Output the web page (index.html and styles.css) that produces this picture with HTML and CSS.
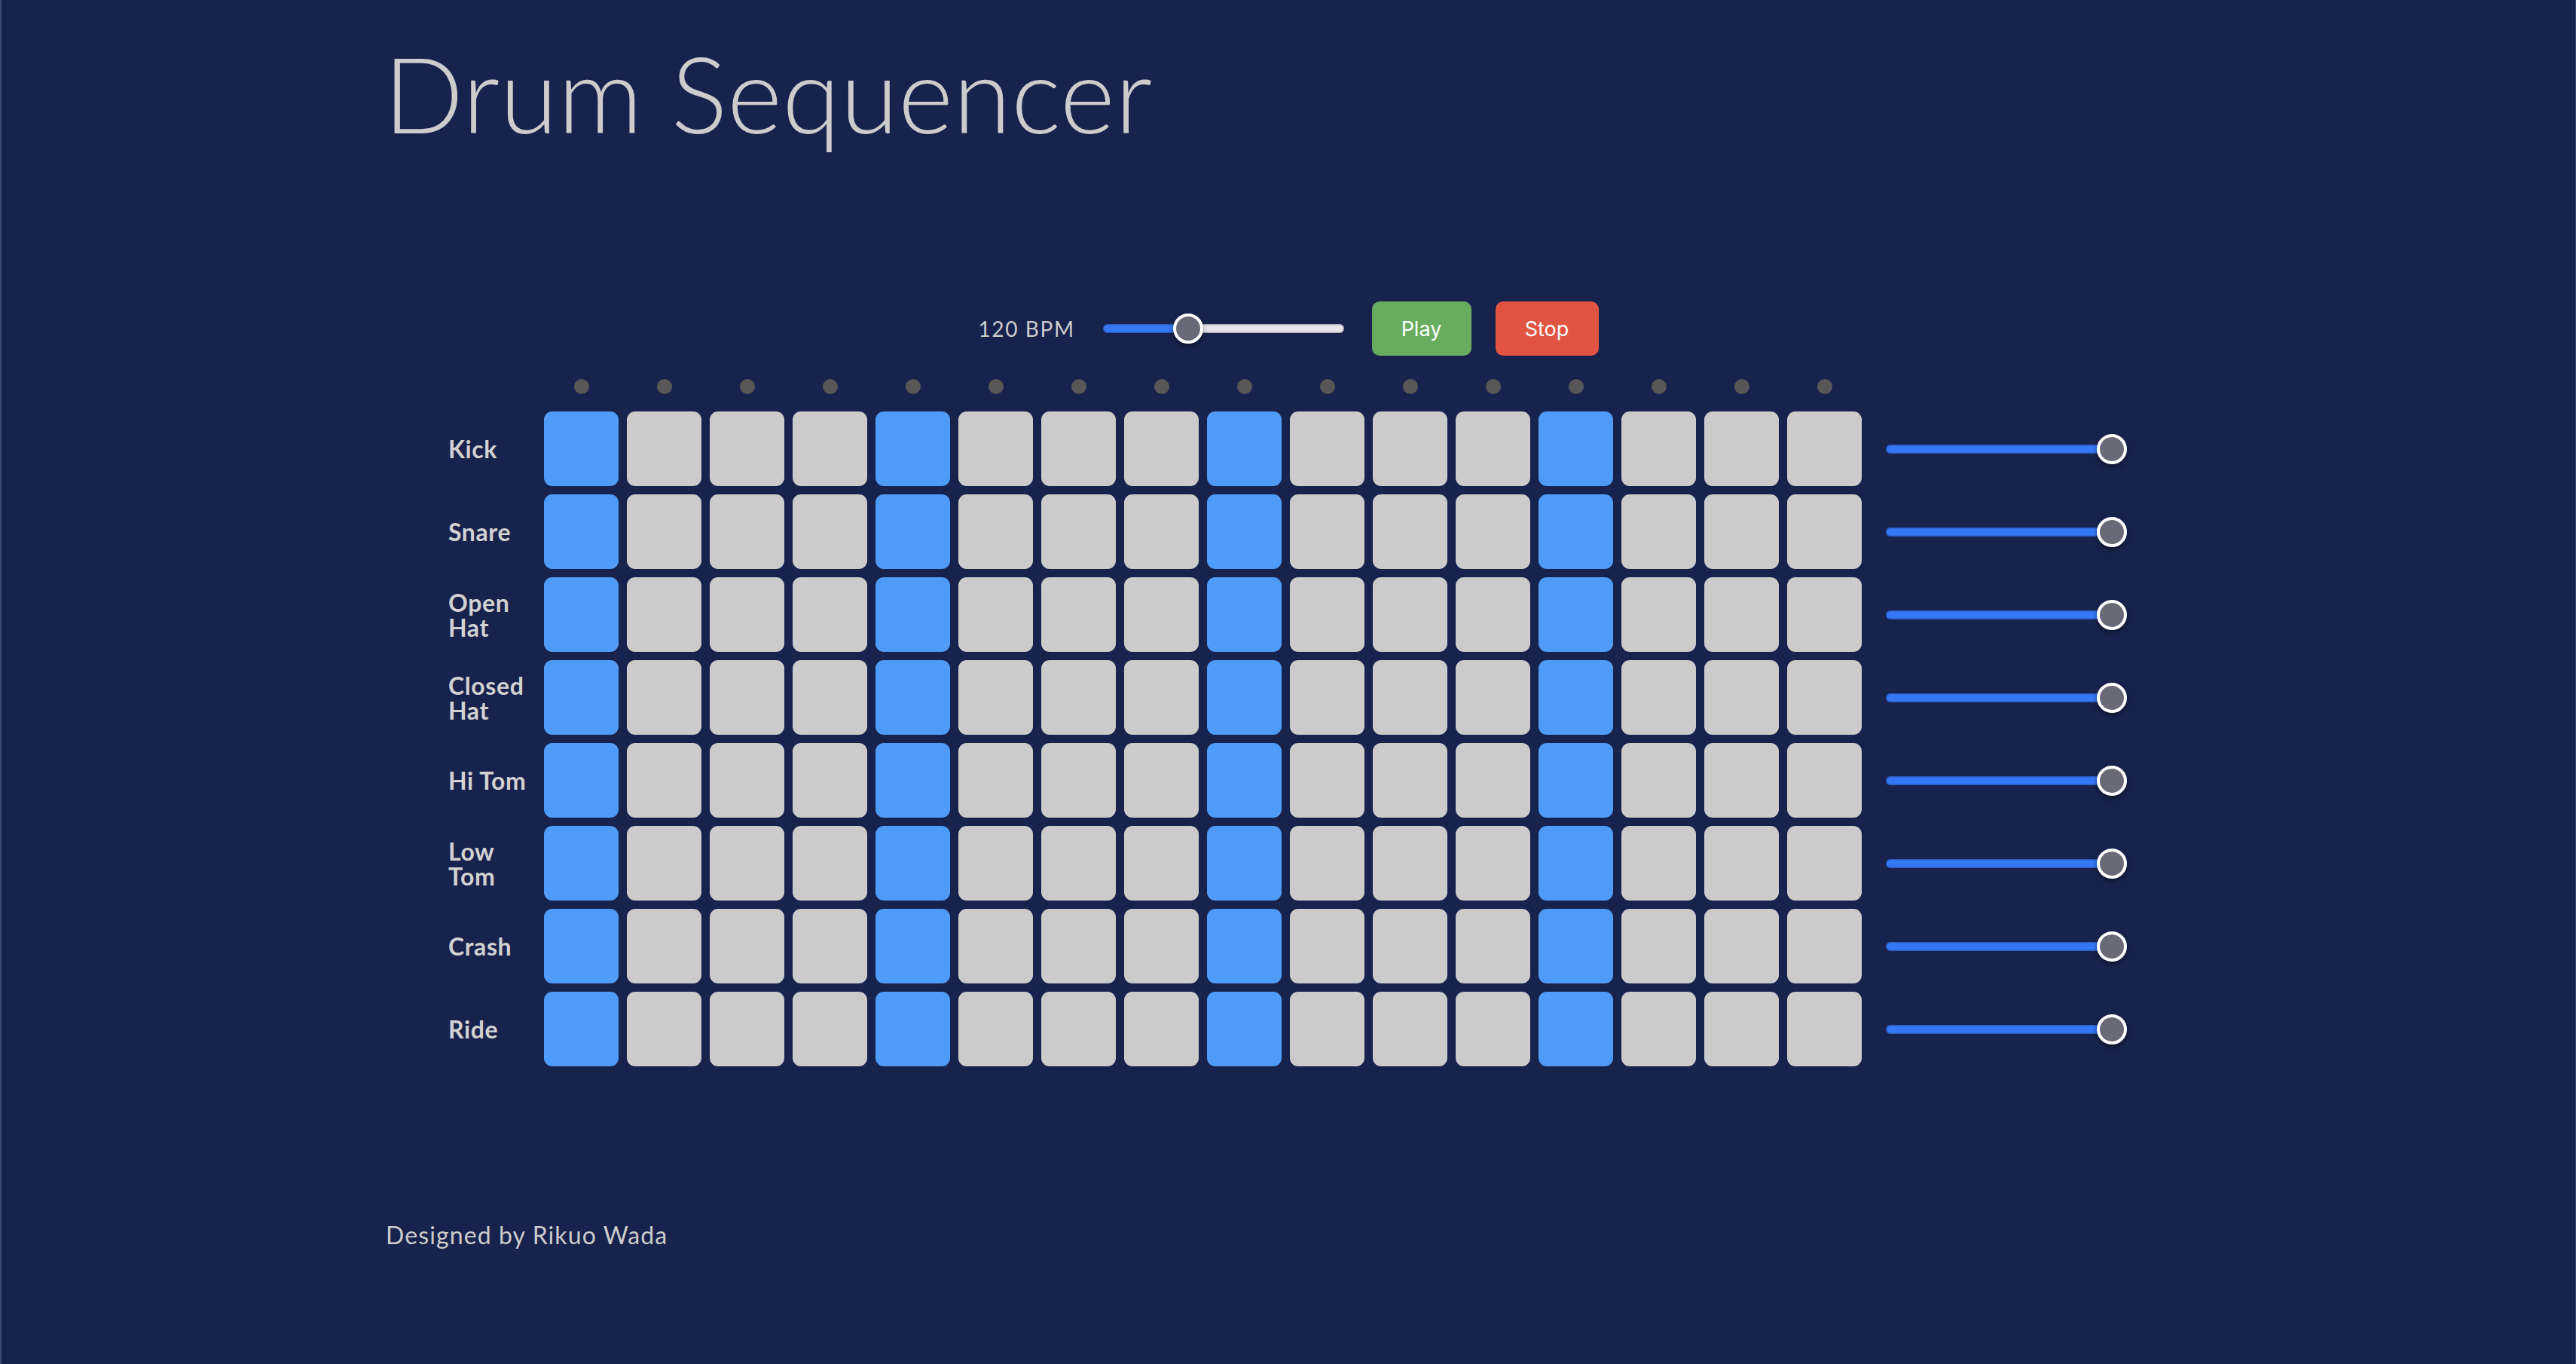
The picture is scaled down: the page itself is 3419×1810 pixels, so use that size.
FILE: index.html
```html
<!DOCTYPE html>
<html lang="en">
<head>
<meta charset="utf-8">
<title>Drum Sequencer</title>
<link rel="stylesheet" href="styles.css">
</head>
<body>
<div class="page">
  <header class="header">
    <h1 class="title">Drum Sequencer</h1>
  </header>

  <main class="sequencer">
    <div class="controls">
      <span class="bpm-label">120 BPM</span>
      <input class="slider bpm-slider" type="range" min="60" max="240" value="120" style="--fill: 35.4%">
      <button class="btn btn-play">Play</button>
      <button class="btn btn-stop">Stop</button>
    </div>

    <div class="board">
      <div class="row steps-row">
        <div class="label"></div>
        <div class="steps">
          <span class="step"></span><span class="step"></span><span class="step"></span><span class="step"></span>
          <span class="step"></span><span class="step"></span><span class="step"></span><span class="step"></span>
          <span class="step"></span><span class="step"></span><span class="step"></span><span class="step"></span>
          <span class="step"></span><span class="step"></span><span class="step"></span><span class="step"></span>
        </div>
        <div class="volume-spacer"></div>
      </div>

      <div class="row">
        <div class="label">Kick</div>
        <div class="cells">
          <div class="cell on"></div><div class="cell"></div><div class="cell"></div><div class="cell"></div>
          <div class="cell on"></div><div class="cell"></div><div class="cell"></div><div class="cell"></div>
          <div class="cell on"></div><div class="cell"></div><div class="cell"></div><div class="cell"></div>
          <div class="cell on"></div><div class="cell"></div><div class="cell"></div><div class="cell"></div>
        </div>
        <input class="slider volume" type="range" min="0" max="1" step="0.01" value="1" style="--fill: 100%">
      </div>

      <div class="row">
        <div class="label">Snare</div>
        <div class="cells">
          <div class="cell on"></div><div class="cell"></div><div class="cell"></div><div class="cell"></div>
          <div class="cell on"></div><div class="cell"></div><div class="cell"></div><div class="cell"></div>
          <div class="cell on"></div><div class="cell"></div><div class="cell"></div><div class="cell"></div>
          <div class="cell on"></div><div class="cell"></div><div class="cell"></div><div class="cell"></div>
        </div>
        <input class="slider volume" type="range" min="0" max="1" step="0.01" value="1" style="--fill: 100%">
      </div>

      <div class="row">
        <div class="label">Open Hat</div>
        <div class="cells">
          <div class="cell on"></div><div class="cell"></div><div class="cell"></div><div class="cell"></div>
          <div class="cell on"></div><div class="cell"></div><div class="cell"></div><div class="cell"></div>
          <div class="cell on"></div><div class="cell"></div><div class="cell"></div><div class="cell"></div>
          <div class="cell on"></div><div class="cell"></div><div class="cell"></div><div class="cell"></div>
        </div>
        <input class="slider volume" type="range" min="0" max="1" step="0.01" value="1" style="--fill: 100%">
      </div>

      <div class="row">
        <div class="label">Closed Hat</div>
        <div class="cells">
          <div class="cell on"></div><div class="cell"></div><div class="cell"></div><div class="cell"></div>
          <div class="cell on"></div><div class="cell"></div><div class="cell"></div><div class="cell"></div>
          <div class="cell on"></div><div class="cell"></div><div class="cell"></div><div class="cell"></div>
          <div class="cell on"></div><div class="cell"></div><div class="cell"></div><div class="cell"></div>
        </div>
        <input class="slider volume" type="range" min="0" max="1" step="0.01" value="1" style="--fill: 100%">
      </div>

      <div class="row">
        <div class="label">Hi Tom</div>
        <div class="cells">
          <div class="cell on"></div><div class="cell"></div><div class="cell"></div><div class="cell"></div>
          <div class="cell on"></div><div class="cell"></div><div class="cell"></div><div class="cell"></div>
          <div class="cell on"></div><div class="cell"></div><div class="cell"></div><div class="cell"></div>
          <div class="cell on"></div><div class="cell"></div><div class="cell"></div><div class="cell"></div>
        </div>
        <input class="slider volume" type="range" min="0" max="1" step="0.01" value="1" style="--fill: 100%">
      </div>

      <div class="row">
        <div class="label">Low Tom</div>
        <div class="cells">
          <div class="cell on"></div><div class="cell"></div><div class="cell"></div><div class="cell"></div>
          <div class="cell on"></div><div class="cell"></div><div class="cell"></div><div class="cell"></div>
          <div class="cell on"></div><div class="cell"></div><div class="cell"></div><div class="cell"></div>
          <div class="cell on"></div><div class="cell"></div><div class="cell"></div><div class="cell"></div>
        </div>
        <input class="slider volume" type="range" min="0" max="1" step="0.01" value="1" style="--fill: 100%">
      </div>

      <div class="row">
        <div class="label">Crash</div>
        <div class="cells">
          <div class="cell on"></div><div class="cell"></div><div class="cell"></div><div class="cell"></div>
          <div class="cell on"></div><div class="cell"></div><div class="cell"></div><div class="cell"></div>
          <div class="cell on"></div><div class="cell"></div><div class="cell"></div><div class="cell"></div>
          <div class="cell on"></div><div class="cell"></div><div class="cell"></div><div class="cell"></div>
        </div>
        <input class="slider volume" type="range" min="0" max="1" step="0.01" value="1" style="--fill: 100%">
      </div>

      <div class="row">
        <div class="label">Ride</div>
        <div class="cells">
          <div class="cell on"></div><div class="cell"></div><div class="cell"></div><div class="cell"></div>
          <div class="cell on"></div><div class="cell"></div><div class="cell"></div><div class="cell"></div>
          <div class="cell on"></div><div class="cell"></div><div class="cell"></div><div class="cell"></div>
          <div class="cell on"></div><div class="cell"></div><div class="cell"></div><div class="cell"></div>
        </div>
        <input class="slider volume" type="range" min="0" max="1" step="0.01" value="1" style="--fill: 100%">
      </div>
    </div>
  </main>

  <footer class="footer">Designed by Rikuo Wada</footer>
</div>
</body>
</html>
```

FILE: styles.css
```css
* {
  box-sizing: border-box;
}

html {
  background: #18234d;
  border-left: 2px solid #3d4970;
  border-right: 1px solid #3d4970;
  min-height: 100%;
}

body {
  margin: 0;
  font-family: "Lato", "Open Sans", sans-serif;
  color: #cccccc;
  min-height: 1810px;
}

.page {
  width: 2396px;
  margin: 0 auto;
  padding-top: 53px;
}

.title {
  margin: 0 0 0 -3px;
  font-family: "Lato", sans-serif;
  font-weight: 300;
  font-size: 140px;
  line-height: 140px;
  color: #cccccc;
  letter-spacing: 0;
}

.sequencer {
  display: flex;
  flex-direction: column;
  align-items: center;
  margin-top: 207px;
}

.controls {
  display: flex;
  align-items: center;
  height: 72px;
}

.bpm-label {
  font-size: 28px;
  font-weight: 400;
  letter-spacing: 1.6px;
  color: #cccccc;
  margin-right: 37px;
}

.slider {
  -webkit-appearance: none;
  appearance: none;
  width: 320px;
  height: 40px;
  margin: 0;
  padding: 0;
  background: transparent;
}

.slider::-webkit-slider-runnable-track {
  height: 12px;
  border-radius: 6px;
  background: linear-gradient(to right, #3478f6 var(--fill), #e8e7ec var(--fill));
  box-shadow: inset 0 0 0 1.5px rgba(20, 20, 60, 0.28);
}

.slider::-webkit-slider-thumb {
  -webkit-appearance: none;
  appearance: none;
  box-sizing: border-box;
  width: 40px;
  height: 40px;
  margin-top: -14px;
  border-radius: 50%;
  background: #696977;
  border: 4px solid #ffffff;
  box-shadow: 0 3px 6px rgba(0, 0, 0, 0.45);
}

.bpm-slider {
  margin-right: 37px;
}

.btn {
  height: 72px;
  border: none;
  border-radius: 10px;
  color: #ffffff;
  font-family: "Inter", "Roboto", sans-serif;
  font-size: 27px;
  font-weight: 400;
  padding: 0;
}

.btn-play {
  width: 132px;
  background: #68ad5f;
  margin-right: 32px;
}

.btn-stop {
  width: 137px;
  background: #e15442;
}

.board {
  display: flex;
  flex-direction: column;
  gap: 11px;
  margin-top: 31px;
  transform: translateX(-1px);
}

.row {
  display: flex;
  align-items: center;
}

.label {
  width: 118px;
  margin-right: 9px;
  font-weight: 700;
  font-size: 32px;
  line-height: 33px;
  letter-spacing: 0.6px;
  color: #d2d2d2;
}

.cells,
.steps {
  display: grid;
  grid-template-columns: repeat(16, 99px);
  column-gap: 11px;
}

.steps {
  justify-items: center;
  height: 32px;
  align-items: start;
}

.step {
  width: 20px;
  height: 20px;
  border-radius: 50%;
  background: #575757;
}

.cell {
  height: 99px;
  border-radius: 11px;
  background: #cbcbcb;
}

.cell.on {
  background: #4f9cf8;
}

.volume,
.volume-spacer {
  width: 320px;
  margin-left: 32px;
}

.footer {
  margin-top: 204px;
  font-size: 32px;
  line-height: 40px;
  letter-spacing: 1.1px;
  color: #cccccc;
}
```
